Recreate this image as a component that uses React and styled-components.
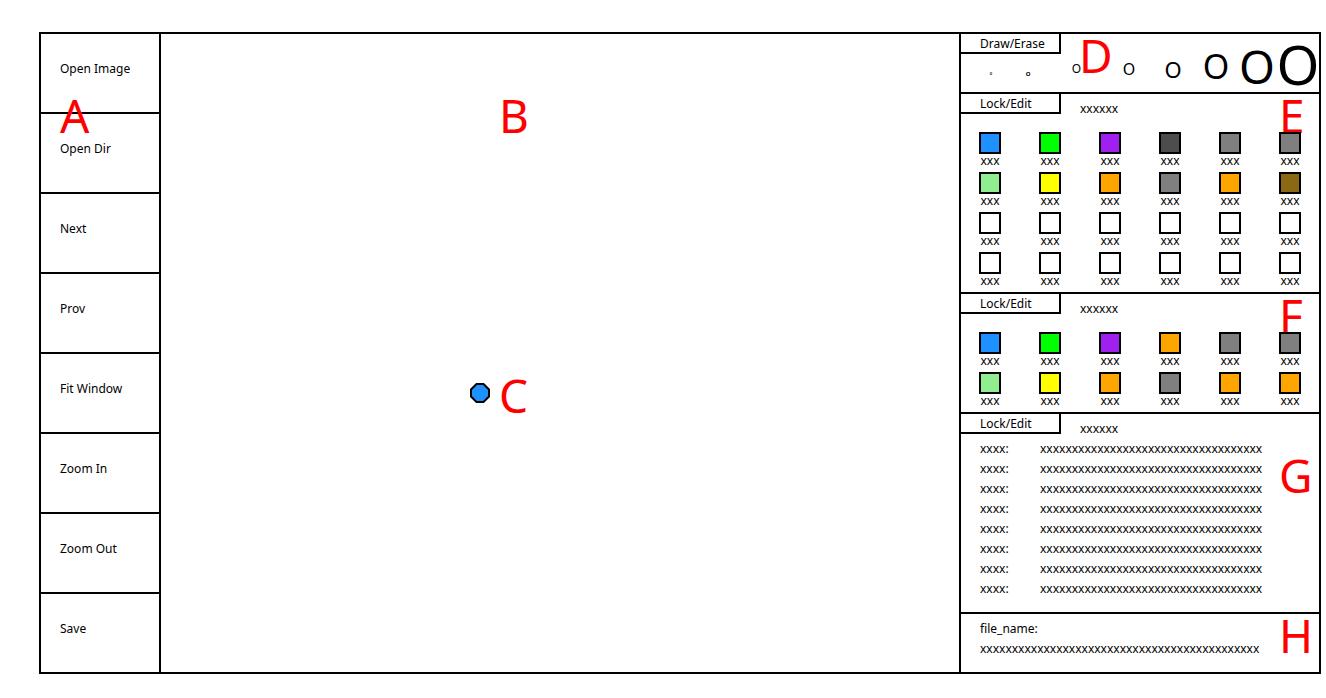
import React from "react";
import styled, { createGlobalStyle } from "styled-components";

const Global = createGlobalStyle`
  *, *::before, *::after { box-sizing: border-box; }
  body {
    margin: 0;
    background: #fff;
    color: #000;
    font: 12px/16px "Noto Sans", sans-serif;
  }
  button {
    margin: 0;
    padding: 0;
    border: 0;
    background: none;
    color: inherit;
    font: inherit;
    cursor: pointer;
  }
`;

const Page = styled.main`
  padding: 32px 5px 24px 39px;
`;

const Frame = styled.div`
  display: grid;
  grid-template-columns: 120px 1fr 360px;
  border: 2px solid #000;
`;

const Toolbar = styled.nav`
  position: relative;
  display: flex;
  flex-direction: column;
  border-right: 2px solid #000;
`;

const ToolButton = styled.button`
  height: 80px;
  padding-left: 19px;
  padding-bottom: 8px;
  border-bottom: 2px solid #000;
  text-align: left;
  &:last-of-type {
    height: 78px;
    border-bottom: 0;
  }
`;

const Canvas = styled.section`
  position: relative;
`;

const Cursor = styled.svg`
  position: absolute;
  left: 309px;
  top: 349px;
  width: 20px;
  height: 20px;
`;

const Marker = styled.span`
  position: absolute;
  left: ${(p) => p.$x}px;
  top: ${(p) => p.$y}px;
  color: #f00;
  font-size: 46px;
  line-height: 46px;
  pointer-events: none;
`;

const Panel = styled.aside`
  border-left: 2px solid #000;
`;

const Section = styled.section`
  position: relative;
  height: ${(p) => p.$height}px;
  border-bottom: 2px solid #000;
  &:last-child {
    border-bottom: 0;
  }
`;

const Header = styled.header`
  display: flex;
  height: 20px;
`;

const TabButton = styled.button`
  width: 100px;
  height: 20px;
  padding: 2px 0 0 19px;
  border: solid #000;
  border-width: 0 2px 2px 0;
  line-height: 16px;
  text-align: left;
`;

const Title = styled.h2`
  margin: 7px 0 0 19px;
  font-size: 12px;
  line-height: 16px;
  font-weight: 400;
`;

const BrushSection = styled(Section)`
  display: grid;
  > * {
    grid-area: 1 / 1;
  }
`;

const Brushes = styled.div`
  display: grid;
  grid-template-columns: 38px 36px 61px 44px 44px 42px 40px 42px;
  align-items: center;
  padding-left: 11px;
`;

const Brush = styled.button`
  display: flex;
  justify-content: center;
  padding-top: ${(p) => p.$drop}px;
  font-size: ${(p) => p.$size}px;
  font-weight: ${(p) => (p.$size < 8 ? 700 : 400)};
  line-height: 1;
`;

const Swatches = styled.div`
  display: grid;
  grid-template-columns: repeat(6, 60px);
  grid-auto-rows: 40px;
  padding: 18px 0 0 18px;
`;

const SwatchButton = styled.button`
  position: relative;
  z-index: 1;
  display: flex;
  flex-direction: column;
  align-items: center;
  width: 22px;
  line-height: 14px;
`;

const Chip = styled.span`
  width: 22px;
  height: 22px;
  border: 2px solid #000;
  background: ${(p) => p.$color};
`;

const Details = styled.dl`
  display: grid;
  grid-template-columns: 60px 1fr;
  grid-auto-rows: 20px;
  margin: 0;
  padding: 5px 0 0 19px;
  line-height: 20px;
`;

const Cell = styled.dd`
  margin: 0;
`;

const FileInfo = styled.div`
  padding: 5px 0 0 19px;
  line-height: 20px;
`;

const Line = styled.p`
  margin: 0;
`;

const tools = ["Open Image", "Open Dir", "Next", "Prov", "Fit Window", "Zoom In", "Zoom Out", "Save"];

const brushes = [
  { size: 3, drop: 22 },
  { size: 6, drop: 22 },
  { size: 12, drop: 12 },
  { size: 16, drop: 12 },
  { size: 22, drop: 12 },
  { size: 34, drop: 6 },
  { size: 46, drop: 6 },
  { size: 55, drop: 0 },
];

const blue = "#1e90ff";
const green = "#00ff00";
const purple = "#a020f0";
const dark = "#4d4d4d";
const gray = "#7f7f7f";
const mint = "#90ee90";
const yellow = "#ffff00";
const orange = "#ffa500";
const brown = "#8b6914";

const firstPalette = [
  blue, green, purple, dark, gray, gray,
  mint, yellow, orange, gray, orange, brown,
  ...Array(12).fill("#fff"),
];

const secondPalette = [
  blue, green, purple, orange, gray, gray,
  mint, yellow, orange, gray, orange, orange,
];

function Palette({ colors }) {
  return (
    <Swatches>
      {colors.map((color, i) => (
        <SwatchButton key={i} type="button">
          <Chip $color={color} />
          xxx
        </SwatchButton>
      ))}
    </Swatches>
  );
}

function EditHeader() {
  return (
    <Header>
      <TabButton type="button">Lock/Edit</TabButton>
      <Title>xxxxxx</Title>
    </Header>
  );
}

export default function App() {
  return (
    <Page>
      <Global />
      <Frame>
        <Toolbar>
          {tools.map((tool) => (
            <ToolButton key={tool} type="button">{tool}</ToolButton>
          ))}
          <Marker $x={19} $y={58}>A</Marker>
        </Toolbar>
        <Canvas>
          <Marker $x={338} $y={58}>B</Marker>
          <Cursor viewBox="0 0 20 20">
            <polygon
              points="6.5,1 13.5,1 19,6.5 19,13.5 13.5,19 6.5,19 1,13.5 1,6.5"
              fill={blue}
              stroke="#000"
              strokeWidth="2"
            />
          </Cursor>
          <Marker $x={338} $y={338}>C</Marker>
        </Canvas>
        <Panel>
          <BrushSection $height={60}>
            <Brushes>
              {brushes.map(({ size, drop }) => (
                <Brush key={size} type="button" $size={size} $drop={drop}>O</Brush>
              ))}
            </Brushes>
            <Header>
              <TabButton type="button">Draw/Erase</TabButton>
            </Header>
            <Marker $x={118} $y={-2}>D</Marker>
          </BrushSection>
          <Section $height={200}>
            <EditHeader />
            <Palette colors={firstPalette} />
            <Marker $x={318} $y={-2}>E</Marker>
          </Section>
          <Section $height={120}>
            <EditHeader />
            <Palette colors={secondPalette} />
            <Marker $x={318} $y={-2}>F</Marker>
          </Section>
          <Section $height={200}>
            <EditHeader />
            <Details>
              {Array.from({ length: 8 }, (_, i) => (
                <React.Fragment key={i}>
                  <dt>xxxx:</dt>
                  <Cell>{"x".repeat(35)}</Cell>
                </React.Fragment>
              ))}
            </Details>
            <Marker $x={318} $y={38}>G</Marker>
          </Section>
          <Section $height={58}>
            <FileInfo>
              <Line>file_name:</Line>
              <Line>{"x".repeat(44)}</Line>
            </FileInfo>
            <Marker $x={318} $y={-2}>H</Marker>
          </Section>
        </Panel>
      </Frame>
    </Page>
  );
}
